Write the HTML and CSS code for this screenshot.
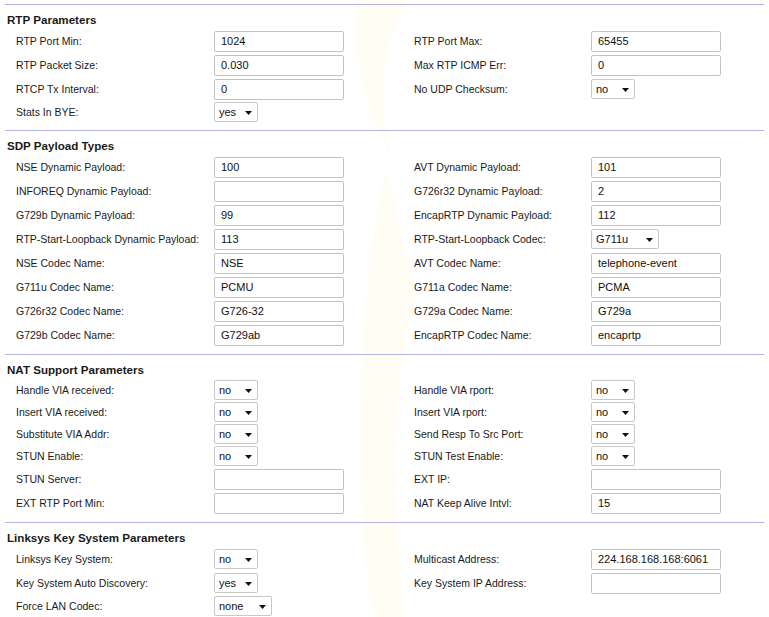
FILE: index.html
```html
<!DOCTYPE html>
<html>
<head>
<meta charset="utf-8">
<link rel="stylesheet" href="styles.css">
</head>
<body>
<div class="page">
  <svg class="watermark" width="120" height="617" viewBox="0 0 120 617">
    <path d="M22 0 C 14 50, 30 110, 58 160 C 40 110, 44 50, 70 0 Z" fill="#fffdf4"/>
    <path d="M50 170 C 30 260, 24 360, 24 440 C 24 520, 30 580, 40 617 L 68 617 C 62 560, 58 500, 60 440 C 62 380, 70 330, 80 300 C 70 260, 60 210, 50 170 Z" fill="#fffdf4"/>
  </svg>

  <section class="sec">
    <div class="rule"></div>
    <h2 class="title">RTP Parameters</h2>
    <div class="rows">
      <div class="row in">
        <span class="lbl">RTP Port Min:</span><span class="fld"><span class="txt">1024</span></span>
        <span class="lbl">RTP Port Max:</span><span class="fld"><span class="txt">65455</span></span>
      </div>
      <div class="row in">
        <span class="lbl">RTP Packet Size:</span><span class="fld"><span class="txt">0.030</span></span>
        <span class="lbl">Max RTP ICMP Err:</span><span class="fld"><span class="txt">0</span></span>
      </div>
      <div class="row in">
        <span class="lbl">RTCP Tx Interval:</span><span class="fld"><span class="txt">0</span></span>
        <span class="lbl">No UDP Checksum:</span><span class="fld"><span class="sel w44"><span>no</span><svg class="arr" width="7" height="4" viewBox="0 0 7 4"><path d="M0 0H7L3.5 4Z"/></svg></span></span>
      </div>
      <div class="row sl">
        <span class="lbl">Stats In BYE:</span><span class="fld"><span class="sel w44"><span>yes</span><svg class="arr" width="7" height="4" viewBox="0 0 7 4"><path d="M0 0H7L3.5 4Z"/></svg></span></span>
        <span class="lbl"></span><span class="fld"></span>
      </div>
    </div>
  </section>

  <section class="sec">
    <div class="rule"></div>
    <h2 class="title">SDP Payload Types</h2>
    <div class="rows">
      <div class="row in">
        <span class="lbl">NSE Dynamic Payload:</span><span class="fld"><span class="txt">100</span></span>
        <span class="lbl">AVT Dynamic Payload:</span><span class="fld"><span class="txt">101</span></span>
      </div>
      <div class="row in">
        <span class="lbl">INFOREQ Dynamic Payload:</span><span class="fld"><span class="txt"></span></span>
        <span class="lbl">G726r32 Dynamic Payload:</span><span class="fld"><span class="txt">2</span></span>
      </div>
      <div class="row in">
        <span class="lbl">G729b Dynamic Payload:</span><span class="fld"><span class="txt">99</span></span>
        <span class="lbl">EncapRTP Dynamic Payload:</span><span class="fld"><span class="txt">112</span></span>
      </div>
      <div class="row in">
        <span class="lbl">RTP-Start-Loopback Dynamic Payload:</span><span class="fld"><span class="txt">113</span></span>
        <span class="lbl">RTP-Start-Loopback Codec:</span><span class="fld"><span class="sel w68"><span>G711u</span><svg class="arr" width="7" height="4" viewBox="0 0 7 4"><path d="M0 0H7L3.5 4Z"/></svg></span></span>
      </div>
      <div class="row in">
        <span class="lbl">NSE Codec Name:</span><span class="fld"><span class="txt">NSE</span></span>
        <span class="lbl">AVT Codec Name:</span><span class="fld"><span class="txt">telephone-event</span></span>
      </div>
      <div class="row in">
        <span class="lbl">G711u Codec Name:</span><span class="fld"><span class="txt">PCMU</span></span>
        <span class="lbl">G711a Codec Name:</span><span class="fld"><span class="txt">PCMA</span></span>
      </div>
      <div class="row in">
        <span class="lbl">G726r32 Codec Name:</span><span class="fld"><span class="txt">G726-32</span></span>
        <span class="lbl">G729a Codec Name:</span><span class="fld"><span class="txt">G729a</span></span>
      </div>
      <div class="row in">
        <span class="lbl">G729b Codec Name:</span><span class="fld"><span class="txt">G729ab</span></span>
        <span class="lbl">EncapRTP Codec Name:</span><span class="fld"><span class="txt">encaprtp</span></span>
      </div>
    </div>
  </section>

  <section class="sec">
    <div class="rule"></div>
    <h2 class="title">NAT Support Parameters</h2>
    <div class="rows">
      <div class="row sl">
        <span class="lbl">Handle VIA received:</span><span class="fld"><span class="sel w44"><span>no</span><svg class="arr" width="7" height="4" viewBox="0 0 7 4"><path d="M0 0H7L3.5 4Z"/></svg></span></span>
        <span class="lbl">Handle VIA rport:</span><span class="fld"><span class="sel w44"><span>no</span><svg class="arr" width="7" height="4" viewBox="0 0 7 4"><path d="M0 0H7L3.5 4Z"/></svg></span></span>
      </div>
      <div class="row sl">
        <span class="lbl">Insert VIA received:</span><span class="fld"><span class="sel w44"><span>no</span><svg class="arr" width="7" height="4" viewBox="0 0 7 4"><path d="M0 0H7L3.5 4Z"/></svg></span></span>
        <span class="lbl">Insert VIA rport:</span><span class="fld"><span class="sel w44"><span>no</span><svg class="arr" width="7" height="4" viewBox="0 0 7 4"><path d="M0 0H7L3.5 4Z"/></svg></span></span>
      </div>
      <div class="row sl">
        <span class="lbl">Substitute VIA Addr:</span><span class="fld"><span class="sel w44"><span>no</span><svg class="arr" width="7" height="4" viewBox="0 0 7 4"><path d="M0 0H7L3.5 4Z"/></svg></span></span>
        <span class="lbl">Send Resp To Src Port:</span><span class="fld"><span class="sel w44"><span>no</span><svg class="arr" width="7" height="4" viewBox="0 0 7 4"><path d="M0 0H7L3.5 4Z"/></svg></span></span>
      </div>
      <div class="row sl">
        <span class="lbl">STUN Enable:</span><span class="fld"><span class="sel w44"><span>no</span><svg class="arr" width="7" height="4" viewBox="0 0 7 4"><path d="M0 0H7L3.5 4Z"/></svg></span></span>
        <span class="lbl">STUN Test Enable:</span><span class="fld"><span class="sel w44"><span>no</span><svg class="arr" width="7" height="4" viewBox="0 0 7 4"><path d="M0 0H7L3.5 4Z"/></svg></span></span>
      </div>
      <div class="row in">
        <span class="lbl">STUN Server:</span><span class="fld"><span class="txt"></span></span>
        <span class="lbl">EXT IP:</span><span class="fld"><span class="txt"></span></span>
      </div>
      <div class="row in">
        <span class="lbl">EXT RTP Port Min:</span><span class="fld"><span class="txt"></span></span>
        <span class="lbl">NAT Keep Alive Intvl:</span><span class="fld"><span class="txt">15</span></span>
      </div>
    </div>
  </section>

  <section class="sec">
    <div class="rule"></div>
    <h2 class="title">Linksys Key System Parameters</h2>
    <div class="rows">
      <div class="row in">
        <span class="lbl">Linksys Key System:</span><span class="fld"><span class="sel w44"><span>no</span><svg class="arr" width="7" height="4" viewBox="0 0 7 4"><path d="M0 0H7L3.5 4Z"/></svg></span></span>
        <span class="lbl">Multicast Address:</span><span class="fld"><span class="txt">224.168.168.168:6061</span></span>
      </div>
      <div class="row in">
        <span class="lbl">Key System Auto Discovery:</span><span class="fld"><span class="sel w44"><span>yes</span><svg class="arr" width="7" height="4" viewBox="0 0 7 4"><path d="M0 0H7L3.5 4Z"/></svg></span></span>
        <span class="lbl">Key System IP Address:</span><span class="fld"><span class="txt"></span></span>
      </div>
      <div class="row sl">
        <span class="lbl">Force LAN Codec:</span><span class="fld"><span class="sel w58"><span>none</span><svg class="arr" width="7" height="4" viewBox="0 0 7 4"><path d="M0 0H7L3.5 4Z"/></svg></span></span>
        <span class="lbl"></span><span class="fld"></span>
      </div>
    </div>
  </section>
</div>
</body>
</html>
```

FILE: styles.css
```css
html, body {
  margin: 0;
  padding: 0;
  background: #ffffff;
}

body {
  font-family: "Liberation Sans", Arial, sans-serif;
  color: #1a1a1a;
  overflow: hidden;
}

.page {
  position: relative;
  width: 769px;
  height: 617px;
  padding-top: 4px;
  box-sizing: border-box;
}

.watermark {
  position: absolute;
  left: 336px;
  top: 0;
  z-index: 0;
}

.sec {
  position: relative;
  z-index: 1;
  padding-bottom: 7px;
}

.rule {
  height: 1px;
  margin: 0 5px;
  background: #b4b4e4;
}

.title {
  margin: 8px 0 0 7px;
  font-size: 11.6px;
  line-height: 14px;
  font-weight: bold;
  color: #1a1a1a;
}

.rows {
  margin-top: 2px;
}

.row {
  display: grid;
  grid-template-columns: 198px 200px 177px 1fr;
  align-items: center;
  padding-left: 16px;
}

.row.in {
  height: 24px;
}

.row.sl {
  height: 22px;
}

.lbl {
  font-size: 10.5px;
  white-space: nowrap;
  color: #1a1a1a;
}

.fld {
  display: flex;
  align-items: center;
}

.txt {
  box-sizing: border-box;
  width: 130px;
  height: 21px;
  border: 1px solid #c2c2c2;
  border-radius: 2px;
  background: #fff;
  padding: 0 6px;
  font-size: 11px;
  line-height: 19px;
  color: #111;
  white-space: nowrap;
  overflow: hidden;
}

.sel {
  box-sizing: border-box;
  height: 20px;
  border: 1px solid #c8c8c8;
  border-radius: 2px;
  background: #fff;
  padding: 0 5px 0 4px;
  display: flex;
  align-items: center;
  justify-content: space-between;
  font-size: 11px;
  color: #111;
}

.w44 { width: 44px; }
.w58 { width: 58px; }
.w68 { width: 68px; }

.arr {
  display: block;
  fill: #111;
  margin-top: 1px;
}
```
